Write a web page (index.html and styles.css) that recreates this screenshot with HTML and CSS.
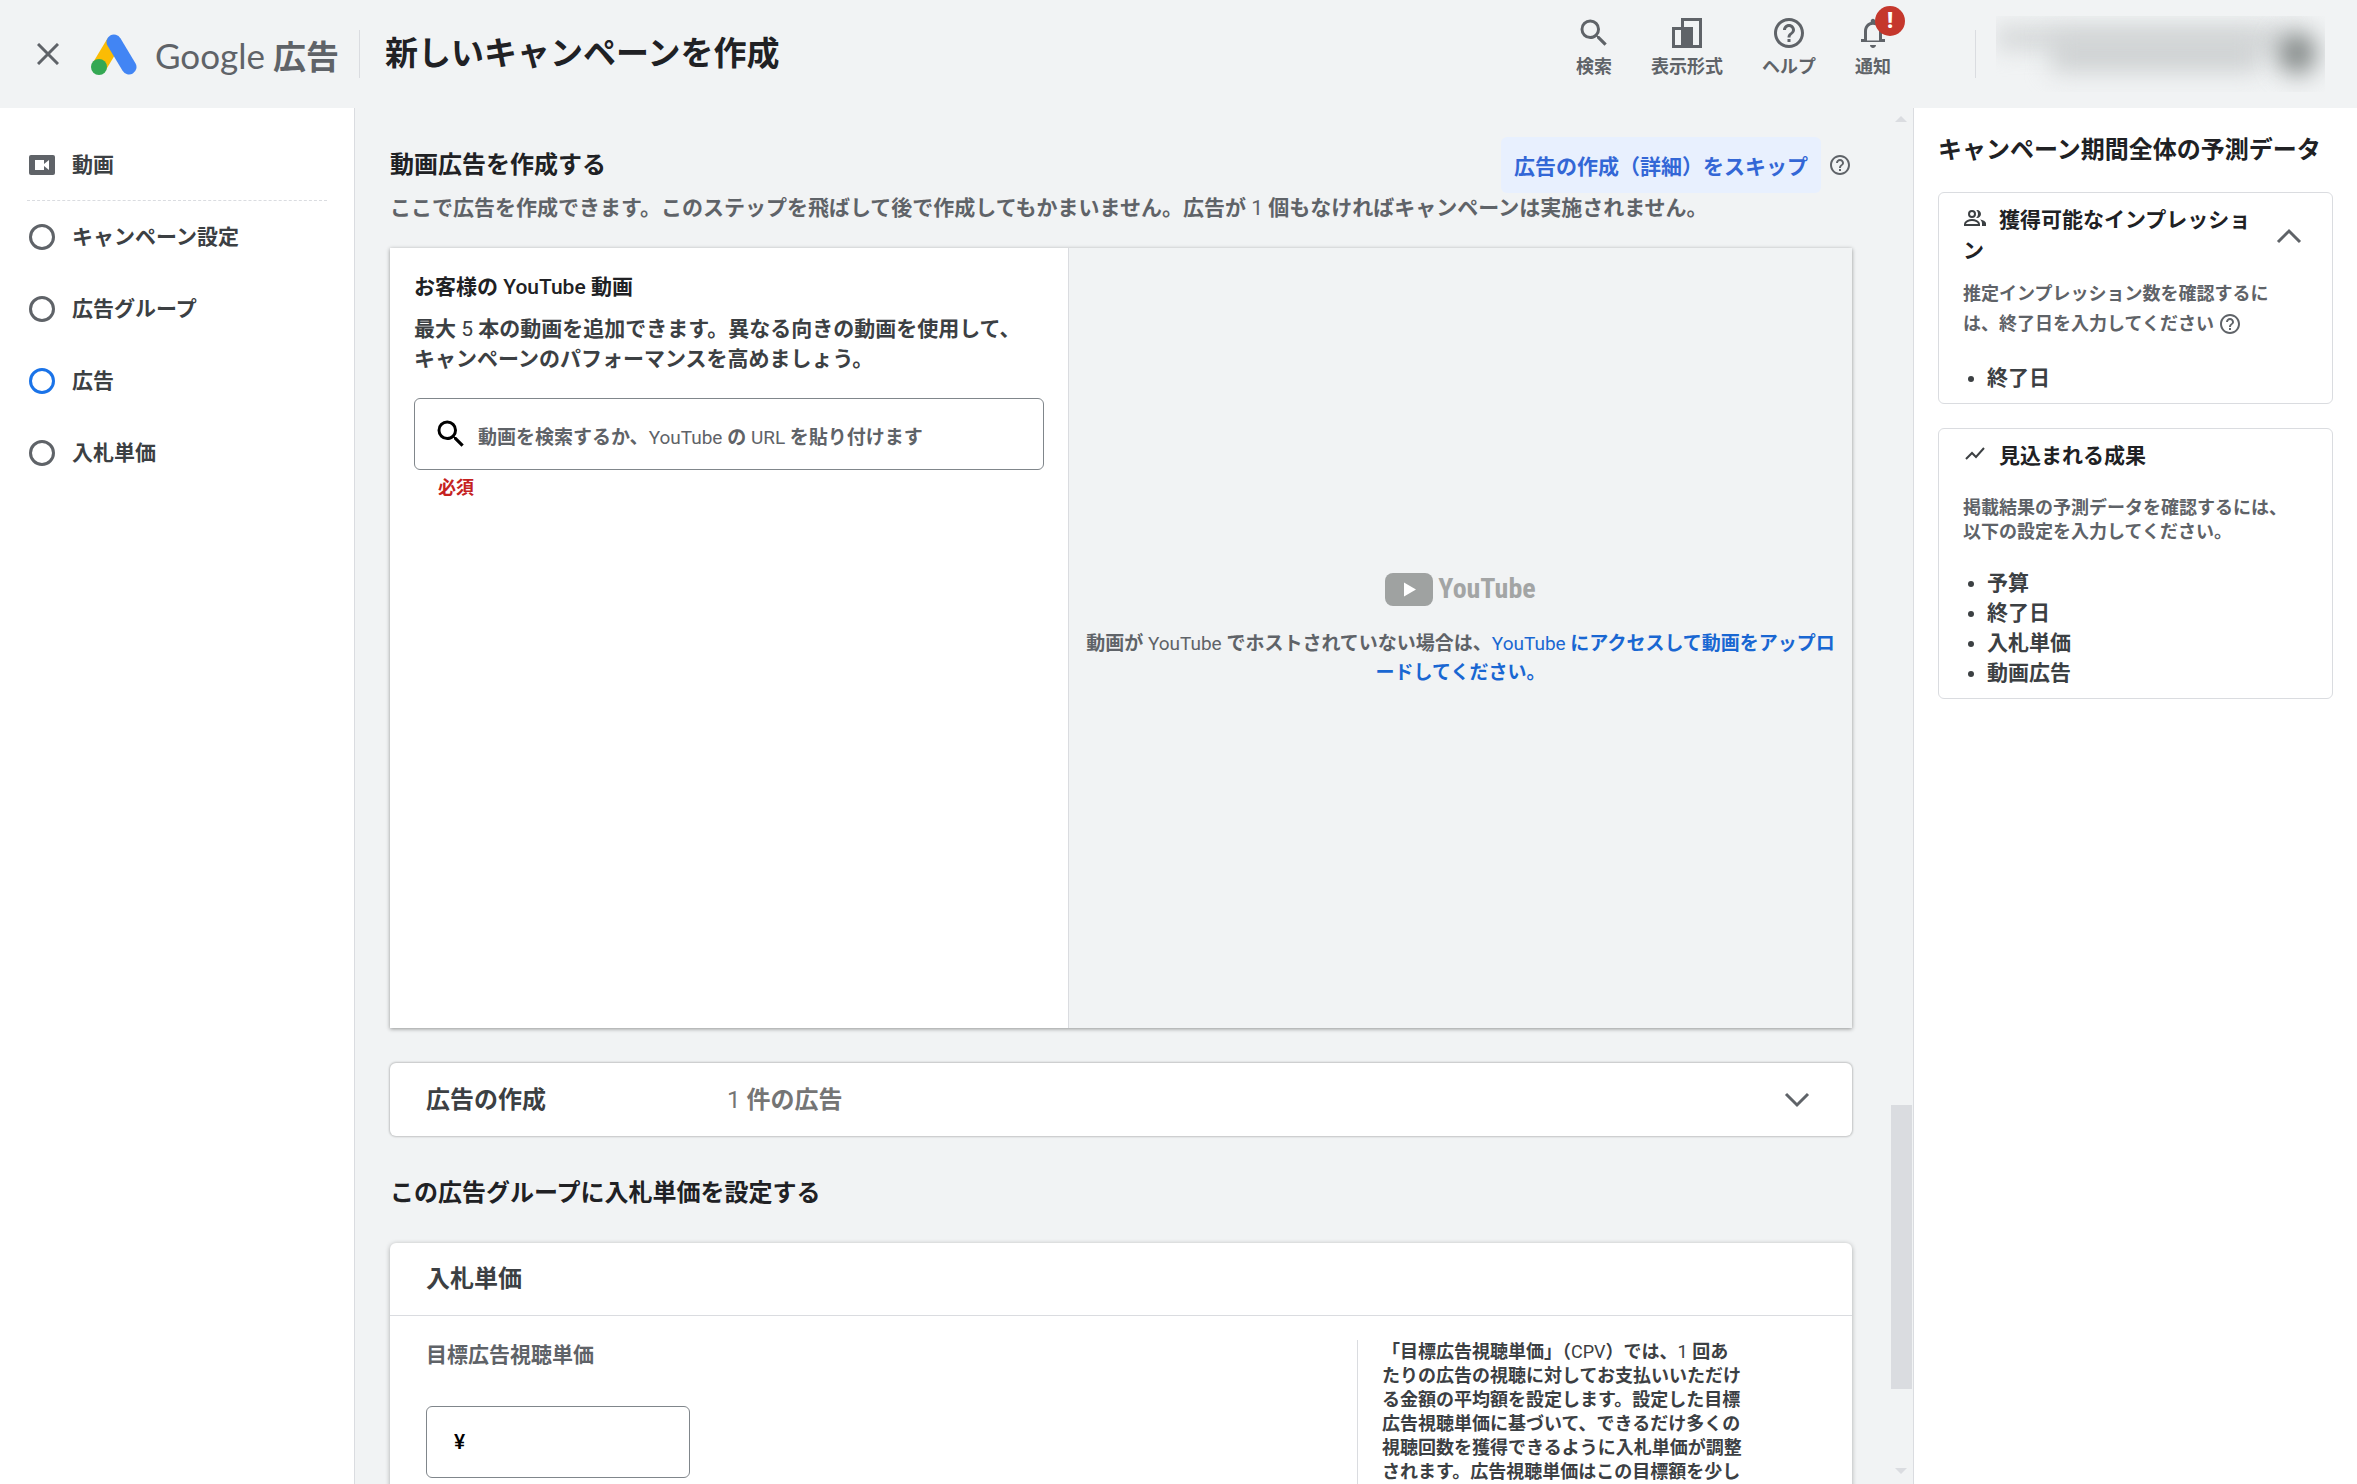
FILE: index.html
```html
<!DOCTYPE html>
<html lang="ja">
<head>
<meta charset="utf-8">
<meta name="viewport" content="width=device-width, initial-scale=1">
<title>新しいキャンペーンを作成 - Google 広告</title>
<link rel="stylesheet" href="styles.css">
</head>
<body>
<svg class="defs" aria-hidden="true">
  <symbol id="i-search" viewBox="0 0 24 24"><path d="M15.5 14h-.79l-.28-.27A6.47 6.47 0 0 0 16 9.5 6.5 6.5 0 1 0 9.5 16c1.61 0 3.09-.59 4.23-1.57l.27.28v.79l5 4.99L20.49 19l-4.99-5zm-6 0C7.01 14 5 11.99 5 9.5S7.01 5 9.5 5 14 7.01 14 9.5 11.99 14 9.5 14z"/></symbol>
  <symbol id="i-help" viewBox="0 0 24 24"><path d="M11 18h2v-2h-2v2zm1-16C6.48 2 2 6.48 2 12s4.48 10 10 10 10-4.48 10-10S17.52 2 12 2zm0 18c-4.41 0-8-3.59-8-8s3.59-8 8-8 8 3.59 8 8-3.59 8-8 8zm0-14c-2.21 0-4 1.79-4 4h2c0-1.1.9-2 2-2s2 .9 2 2c0 2-3 1.75-3 5h2c0-2.25 3-2.5 3-5 0-2.21-1.79-4-4-4z"/></symbol>
</svg>
<header class="topbar">
  <button class="icon-button close" aria-label="閉じる"><svg class="icon-close" viewBox="0 0 22 22"><path d="M1 1l20 20M21 1L1 21"/></svg></button>
  <a class="brand" href="#">
    <svg class="logo" viewBox="0 0 46 41"><path d="M23 8L8 33" stroke="#fbbc04" stroke-width="15"/><circle cx="8" cy="33" r="8" fill="#34a853"/><path d="M23 8l15 25" stroke="#4285f4" stroke-width="15" stroke-linecap="round"/></svg>
    <span class="brand-name"><span class="brand-latin">Google</span> 広告</span>
  </a>
  <h1 class="page-title">新しいキャンペーンを作成</h1>
  <nav class="tools">
    <button class="tool"><svg class="tool-icon"><use href="#i-search"/></svg>検索</button>
    <button class="tool"><svg class="tool-icon" viewBox="-3 -3 36 36"><path fill-rule="evenodd" d="M0 9h9V0h21v30H0zM3 12v15h6V12zM12 3v6h9v18h6V3z"/></svg>表示形式</button>
    <button class="tool"><svg class="tool-icon"><use href="#i-help"/></svg>ヘルプ</button>
    <button class="tool"><svg class="tool-icon" viewBox="0 0 24 24"><path d="M12 22c1.100 0 2-.9 2-2h-4c0 1.100.9 2 2 2zm6-6v-5c0-3.070-1.630-5.640-4.500-6.320V4c0-.83-.67-1.500-1.500-1.500s-1.500.67-1.500 1.500v.68C7.640 5.360 6 7.920 6 11v5l-2 0v2h16v-2l-2 0zm-2 1H8v-6c0-2.480 1.510-4.500 4-4.500s4 2.020 4 4.500v6z"/></svg>通知<span class="badge">!</span></button>
  </nav>
  <div class="account" aria-hidden="true"><div class="account-blur"><i class="blur-line"></i><i class="blur-text"></i><i class="blur-avatar"></i></div></div>
</header>
<div class="shell">
  <nav class="steps">
    <a class="step step-head" href="#"><svg class="step-video" viewBox="0 0 26 20"><rect width="26" height="20" rx="2" fill="#5f6368"/><path d="M6 5h9v4l5-4v10l-5-4v4H6z" fill="#fff"/></svg>動画</a>
    <a class="step" href="#"><span class="dot"></span>キャンペーン設定</a>
    <a class="step" href="#"><span class="dot"></span>広告グループ</a>
    <a class="step" href="#"><span class="dot dot-active"></span>広告</a>
    <a class="step" href="#"><span class="dot"></span>入札単価</a>
  </nav>
  <main class="content">
    <div class="head-row">
      <h2 class="section-title">動画広告を作成する</h2>
      <div class="skip-wrap"><button class="skip">広告の作成（詳細）をスキップ</button><svg class="help-icon"><use href="#i-help"/></svg></div>
    </div>
    <p class="lead">ここで広告を作成できます。このステップを飛ばして後で作成してもかまいません。広告が <span class="latin">1</span> 個もなければキャンペーンは実施されません。</p>
    <section class="video-card">
      <div class="video-form">
        <h3 class="video-title">お客様の <span class="latin-medium">YouTube</span> 動画</h3>
        <p class="video-note">最大 <span class="latin">5</span> 本の動画を追加できます。異なる向きの動画を使用して、<br>キャンペーンのパフォーマンスを高めましょう。</p>
        <div class="search-box">
          <svg class="search-icon"><use href="#i-search"/></svg>
          <div class="search-field">
            <label class="search-label" for="video-search">動画を検索するか、<span class="latin">YouTube</span> の <span class="latin">URL</span> を貼り付けます</label>
            <input class="search-input" id="video-search" type="text">
          </div>
        </div>
        <p class="required">必須</p>
      </div>
      <div class="video-preview">
        <div class="yt"><svg class="yt-icon" viewBox="0 0 48 33"><rect width="48" height="33" rx="8" fill="#9fa2a1"/><path d="M19 9.500v14l12-7z" fill="#fff"/></svg><span class="yt-word">YouTube</span></div>
        <p class="yt-note">動画が <span class="latin">YouTube</span> でホストされていない場合は、<a class="link" href="#"><span class="latin">YouTube</span> にアクセスして動画をアップロ<br>ードしてください。</a></p>
      </div>
    </section>
    <button class="ad-row"><span class="ad-label">広告の作成</span><span class="ad-count"><span class="latin">1</span> 件の広告</span><svg class="chevron" viewBox="0 0 26 16"><path d="M2 2l11 11L24 2"/></svg></button>
    <h2 class="section-title bid-heading">この広告グループに入札単価を設定する</h2>
    <section class="bid-card">
      <h3 class="bid-title">入札単価</h3>
      <div class="bid-body">
        <div class="bid-form">
          <label class="bid-label" for="bid">目標広告視聴単価</label>
          <div class="bid-box"><span class="yen">¥</span><input class="bid-input" id="bid" type="text"></div>
        </div>
        <p class="bid-help">「目標広告視聴単価」（<span class="latin">CPV</span>）では、<span class="latin">1</span> 回あ<br>たりの広告の視聴に対してお支払いいただけ<br>る金額の平均額を設定します。設定した目標<br>広告視聴単価に基づいて、できるだけ多くの<br>視聴回数を獲得できるように入札単価が調整<br>されます。広告視聴単価はこの目標額を少し</p>
      </div>
    </section>
  </main>
  <div class="scrollbar" aria-hidden="true"><i class="arrow-up"></i><i class="thumb"></i><i class="arrow-down"></i></div>
  <aside class="forecast">
    <h2 class="forecast-title">キャンペーン期間全体の予測データ</h2>
    <section class="f-card">
      <div class="f-head"><h3 class="f-title"><svg class="f-icon" viewBox="0 0 24 24"><g fill="none" stroke="#3c4043" stroke-width="2"><circle cx="9" cy="8" r="3"/><path d="M2 19v-1c0-2.500 4-4 7-4s7 1.500 7 4v1z"/></g><path d="M14 12c2.200 0 4-1.800 4-4s-1.800-4-4-4l-.8.1C14.300 5.200 15 6.500 15 8s-.7 2.900-1.800 3.900zM17 13.500c1.200.9 2 2.200 2 3.900V20h4v-2.500c0-2.200-3-3.500-6-4z"/></svg>獲得可能なインプレッション</h3><button class="icon-button" aria-label="折りたたむ"><svg class="chevron" viewBox="0 0 26 16"><path d="M2 14L13 3l11 11"/></svg></button></div>
      <p class="f-note loose">推定インプレッション数を確認するに<br>は、終了日を入力してください <svg class="f-help"><use href="#i-help"/></svg></p>
      <ul class="f-list"><li>終了日</li></ul>
    </section>
    <section class="f-card">
      <h3 class="f-title"><svg class="f-icon" viewBox="0 0 24 24"><path d="M3 17l6-6 4 4L21 6" fill="none" stroke="#3c4043" stroke-width="2"/></svg>見込まれる成果</h3>
      <p class="f-note">掲載結果の予測データを確認するには、<br>以下の設定を入力してください。</p>
      <ul class="f-list"><li>予算</li><li>終了日</li><li>入札単価</li><li>動画広告</li></ul>
    </section>
  </aside>
</div>
</body>
</html>
```
FILE: styles.css
```css
* { box-sizing: border-box; }
body { margin: 0; height: 100vh; overflow: hidden; display: flex; flex-direction: column; background: #f1f3f4; color: #3c4043; font: 700 21px/30px Roboto, "Noto Sans CJK JP", sans-serif; }
h1, h2, h3, p, ul { margin: 0; padding: 0; }
h1, h2, h3 { font-weight: 700; color: #202124; }
button, input { font: inherit; color: inherit; background: none; border: 0; padding: 0; margin: 0; }
a { color: inherit; text-decoration: none; }
svg { fill: currentColor; flex: none; }
.defs { display: none; }
.icon-button { display: flex; }
.latin { font-weight: 400; }
.latin-medium { font-weight: 500; }

.topbar { flex: none; display: flex; align-items: center; height: 108px; padding: 0 32px 0 37px; color: #5f6368; }
.icon-close { width: 22px; height: 22px; stroke: #5f6368; stroke-width: 3; }
.brand { display: flex; align-items: center; gap: 18px; margin-left: 32px; padding-right: 20px; height: 48px; border-right: 1px solid #dadce0; }
.logo { width: 46px; height: 41px; fill: none; }
.brand-name { padding-top: 4px; font-size: 33px; line-height: 48px; }
.brand-latin { font: 400 35px/48px Lato, sans-serif; }
.page-title { margin-left: 25px; font-size: 33px; line-height: 48px; }
.tools { display: flex; gap: 39px; height: 108px; margin-left: auto; }
.tool { position: relative; display: flex; flex-direction: column; align-items: center; gap: 3px; padding-top: 15px; font-size: 18px; line-height: 26px; }
.tool-icon { width: 36px; height: 36px; }
.badge { position: absolute; top: 6px; right: -14px; width: 30px; height: 30px; border-radius: 15px; background: #c5372c; color: #fff; font: 900 22px/30px Roboto, sans-serif; text-align: center; }
.account { margin-left: 84px; padding-left: 20px; height: 48px; border-left: 1px solid #dadce0; display: flex; align-items: center; }
.account-blur { position: relative; width: 329px; height: 76px; overflow: hidden; }
.account-blur i { position: absolute; filter: blur(12px); background: #cfd2d3; }
.blur-line { left: 0; top: 12px; width: 290px; height: 20px; }
.blur-text { left: 55px; top: 20px; width: 210px; height: 36px; }
.account-blur .blur-avatar { left: 282px; top: 16px; width: 38px; height: 42px; border-radius: 50%; background: #7f8584; }

.shell { flex: 1; min-height: 0; display: flex; }
.steps { flex: none; width: 355px; padding: 21px 27px; background: #fff; border-right: 1px solid #dadce0; }
.step { display: flex; align-items: center; gap: 17px; height: 72px; padding-left: 2px; }
.step-head { border-bottom: 1px dashed #dadce0; }
.step-video { width: 26px; height: 20px; }
.dot { width: 26px; height: 26px; border: 3px solid #5f6368; border-radius: 50%; }
.dot-active { border-color: #1a73e8; }

.content { flex: 1; min-width: 0; padding: 29px 37px 0 35px; overflow: hidden; }
.head-row { display: flex; align-items: center; justify-content: space-between; height: 56px; }
.section-title { font-size: 24px; line-height: 36px; }
.skip-wrap { display: flex; align-items: center; gap: 7px; }
.skip { height: 56px; padding: 3px 13px 0; border-radius: 6px; background: #e8f0fe; color: #3367d6; }
.help-icon { width: 24px; height: 24px; color: #5f6368; }
.lead { color: #5f6368; }
.video-card { display: flex; height: 780px; margin-top: 25px; box-shadow: 0 1px 4px rgba(0, 0, 0, .4); }
.video-form { flex: none; width: 679px; padding: 24px; background: #fff; border-right: 1px solid #dadce0; }
.video-title { font-size: 21px; line-height: 30px; }
.video-note { margin-top: 12px; }
.search-box { display: flex; align-items: center; gap: 9px; height: 72px; margin-top: 24px; padding: 0 20px 0 18px; border: 1px solid #80868b; border-radius: 6px; }
.search-icon { width: 36px; height: 36px; color: #000; }
.search-field { position: relative; flex: 1; }
.search-label { position: absolute; top: 4px; left: 0; font-size: 19px; line-height: 30px; color: #5f6368; white-space: nowrap; }
.search-input { display: block; width: 100%; outline: 0; font-size: 19px; line-height: 30px; }
.required { margin-top: 4px; padding-left: 24px; font-size: 18px; line-height: 28px; color: #c5221f; }
.video-preview { flex: 1; display: flex; flex-direction: column; align-items: center; justify-content: center; padding-bottom: 18px; background: #f1f3f4; }
.yt { display: flex; align-items: center; gap: 5px; margin-bottom: 22px; }
.yt-icon { width: 48px; height: 33px; }
.yt-word { color: #a3a5a5; font: 700 28px/36px "Liberation Sans Narrow", "Roboto Condensed", Roboto, sans-serif; }
.yt-note { text-align: center; font-size: 19px; line-height: 29px; color: #5f6368; }
.link { color: #1967d2; }
.ad-row { display: flex; align-items: center; width: 100%; height: 73px; margin-top: 35px; padding: 0 42px 0 36px; background: #fff; border-radius: 6px; box-shadow: 0 0 2px 1px rgba(0, 0, 0, .2); font-size: 24px; text-align: left; }
.ad-label { width: 301px; }
.ad-count { flex: 1; color: #757575; }
.chevron { width: 26px; height: 16px; fill: none; stroke: #5f6368; stroke-width: 3; }
.bid-heading { margin-top: 39px; }
.bid-card { margin-top: 32px; height: 400px; background: #fff; border-radius: 6px 6px 0 0; box-shadow: 0 1px 5px rgba(0, 0, 0, .3); }
.bid-title { height: 73px; padding: 0 36px; font-size: 24px; line-height: 72px; color: #3c4043; border-bottom: 1px solid #dadce0; }
.bid-body { display: flex; justify-content: space-between; padding: 24px 102px 0 36px; }
.bid-label { display: block; color: #5f6368; }
.bid-box { display: flex; align-items: center; gap: 10px; width: 264px; height: 72px; margin-top: 36px; padding: 0 27px; border: 1px solid #80868b; border-radius: 6px; color: #000; }
.yen { font-weight: 500; }
.bid-input { width: 170px; outline: 0; }
.bid-help { width: 393px; padding-left: 24px; border-left: 1px solid #dadce0; font-size: 18px; line-height: 24px; white-space: nowrap; }

.scrollbar { flex: none; width: 24px; padding: 8px 0; display: flex; flex-direction: column; align-items: center; }
.arrow-up { border: 6px solid transparent; border-top: 0; border-bottom: 6px solid #dadce0; }
.arrow-down { margin-top: auto; margin-bottom: 2px; border: 6px solid transparent; border-bottom: 0; border-top: 6px solid #dadce0; }
.thumb { width: 21px; height: 284px; margin-top: 983px; background: #dadce0; }

.forecast { flex: none; width: 444px; padding: 24px; background: #fff; border-left: 1px solid #dadce0; }
.forecast-title { font-size: 24px; line-height: 36px; white-space: nowrap; }
.f-card { margin-top: 24px; padding: 12px 24px 10px; border: 1px solid #dadce0; border-radius: 6px; }
.f-head { display: flex; align-items: center; gap: 20px; padding-right: 6px; }
.f-title { flex: 1; font-size: 21px; line-height: 31px; }
.f-icon { width: 24px; height: 24px; margin-right: 12px; vertical-align: -3px; color: #3c4043; }
.f-note { margin: 24px 0; font-size: 18px; line-height: 24px; color: #5f6368; white-space: nowrap; }
.loose { margin: 12px 0 24px; line-height: 30px; }
.f-help { width: 24px; height: 24px; vertical-align: -6px; }
.f-list { padding-left: 24px; }
```
